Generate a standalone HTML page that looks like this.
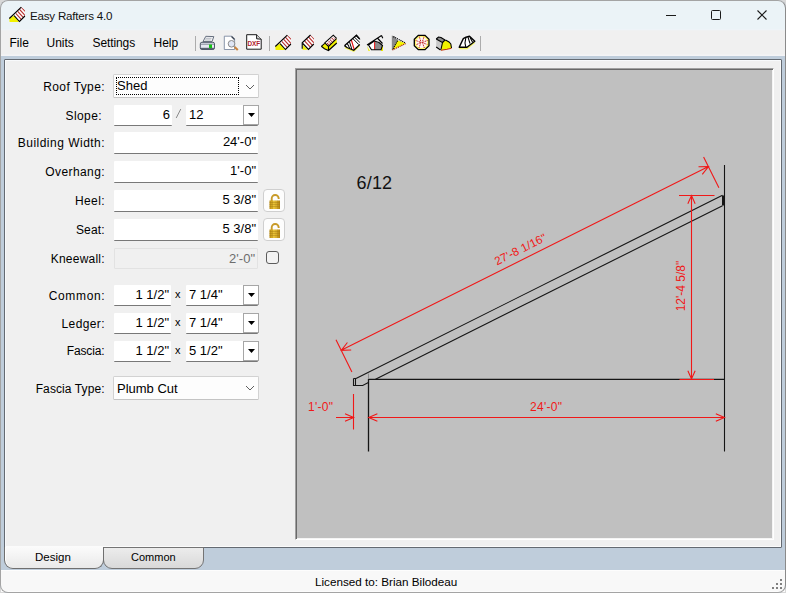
<!DOCTYPE html>
<html><head><meta charset="utf-8">
<style>
*{box-sizing:border-box}
html,body{margin:0;padding:0;width:786px;height:593px;overflow:hidden;background:#d8d8d8}
body{font-family:"Liberation Sans",sans-serif;position:relative}
.a{position:absolute}
#win{position:absolute;left:0;top:0;width:786px;height:593px;border-radius:8px;overflow:hidden;background:#bfcddb}
#wb{position:absolute;left:0;top:0;width:786px;height:593px;border-radius:8px;border:1px solid #a4a4a4;border-right-color:#8a8a8a;pointer-events:none;z-index:10}
#title{position:absolute;left:0;top:0;width:786px;height:31px;background:linear-gradient(#ebf3f7 0,#ebf3f7 29px,#eef3f8 29px,#eef3f8 30px,#eff1f2 30px)}
#menu{position:absolute;left:0;top:31px;width:786px;height:25px;background:linear-gradient(#f0f0f0 0,#f0f0f0 23px,#f4f4f6 24px)}
.mi{position:absolute;top:36px;font-size:12px;color:#000;line-height:14px}
.lbl{position:absolute;font-size:12px;letter-spacing:0.4px;color:#000;text-align:right;right:681px;line-height:14px;white-space:nowrap}
.tb{position:absolute;background:#fff;border-bottom:1px solid #787878;border-radius:1px;font-size:13px;line-height:20px;text-align:right;padding-right:2px;white-space:nowrap}
.dd{position:absolute;width:16px;background:#fff;border:1px solid #a6a6a6;}
.dd:after{content:"";position:absolute;left:4px;top:7px;width:7px;height:4px;background:#000;clip-path:polygon(0 0,100% 0,50% 100%)}
.sep{position:absolute;width:1px;background:#acacac}
.cb{background:#fdfdfd;border:1px solid #d2d2d2;border-bottom-color:#c4c4c4;border-radius:1.5px}
.lockb{width:22px;height:23px;border:1px solid #cfcfcf;border-radius:4px;background:#fdfdfd;overflow:hidden}
</style></head><body>
<div id="win">
  <div id="title"></div>
  <div id="menu"></div>
</div>
<!-- title -->
<div class="a" style="left:30px;top:9px;font-size:11.6px;letter-spacing:-0.22px;color:#111;line-height:13px">Easy Rafters 4.0</div>
<div class="a" style="left:666px;top:15px;width:10px;height:1px;background:#1a1a1a"></div>
<div class="a" style="left:711px;top:10px;width:10px;height:10px;border:1px solid #1a1a1a;border-radius:1.5px"></div>
<svg class="a" style="left:757px;top:10px" width="10" height="10"><path d="M0.5 0.5L9.5 9.5M9.5 0.5L0.5 9.5" stroke="#1a1a1a" stroke-width="1.1"/></svg>

<!-- menu -->
<div class="mi" style="left:9.5px">File</div>
<div class="mi" style="left:46.5px">Units</div>
<div class="mi" style="left:92.5px;letter-spacing:-0.1px">Settings</div>
<div class="mi" style="left:153.5px">Help</div>
<div class="sep" style="left:195px;top:36px;height:15px"></div>
<div class="sep" style="left:269px;top:36px;height:15px"></div>
<div class="sep" style="left:480px;top:36px;height:15px"></div>

<!-- main panel -->
<div class="a" style="left:4px;top:59px;width:778px;height:489px;background:#f0f0f0;border:1px solid #646a72;border-radius:1px;box-shadow:inset 1px 1px 0 #f8fafc, inset -1px -1px 0 #fbfbfb"></div>


<!-- left form -->
<div class="lbl" style="top:80px">Roof Type:</div>
<div class="lbl" style="top:109px;right:684px">Slope:</div>
<div class="lbl" style="top:136px;letter-spacing:0.49px;right:680.9px">Building Width:</div>
<div class="lbl" style="top:165px">Overhang:</div>
<div class="lbl" style="top:194px">Heel:</div>
<div class="lbl" style="top:223px;letter-spacing:0.14px;right:681.3px">Seat:</div>
<div class="lbl" style="top:252px;letter-spacing:0.23px;right:681.2px">Kneewall:</div>
<div class="lbl" style="top:289px;letter-spacing:0.65px;right:680.7px">Common:</div>
<div class="lbl" style="top:317px">Ledger:</div>
<div class="lbl" style="top:344px;letter-spacing:-0.13px;right:681.5px">Fascia:</div>
<div class="lbl" style="top:382px;letter-spacing:0.1px;right:681.3px">Fascia Type:</div>

<div class="a cb" style="left:113px;top:74px;width:146px;height:24px"></div>
<div class="a" style="left:116px;top:77px;width:123px;height:18px;border:1px dotted #000"></div>
<div class="a" style="left:117px;top:76px;font-size:13px;line-height:20px">Shed</div>
<svg class="a" style="left:245px;top:84px" width="10" height="6"><path d="M1 1L5 5L9 1" fill="none" stroke="#606060" stroke-width="1"/></svg>

<div class="tb" style="left:114px;top:105px;width:58px;height:21px">6</div>
<svg class="a" style="left:175px;top:108px" width="7" height="11"><path d="M1.2,10L5.8,1" stroke="#8a8a8a" stroke-width="1"/></svg>
<div class="tb" style="left:186px;top:105px;width:72px;height:21px;text-align:left;padding-left:3px">12</div>
<div class="dd" style="left:243px;top:105px;height:20px"></div>

<div class="tb" style="left:114px;top:132px;width:144px;height:22px">24'-0"</div>
<div class="tb" style="left:114px;top:161px;width:144px;height:22px">1'-0"</div>
<div class="tb" style="left:114px;top:190px;width:144px;height:22px">5 3/8"</div>
<div class="tb" style="left:114px;top:219px;width:144px;height:22px">5 3/8"</div>
<div class="tb" style="left:114px;top:248px;width:144px;height:21px;background:#f0f0f0;border:1px solid #e2e2e2;color:#6d6d6d;line-height:19px">2'-0"</div>

<div class="a lockb" style="left:263px;top:189px"><svg width="22" height="23" style="position:absolute;left:0;top:0"><defs><linearGradient id="lg" x1="0" y1="0" x2="1" y2="0"><stop offset="0" stop-color="#b88a10"/><stop offset="0.45" stop-color="#f2cc40"/><stop offset="1" stop-color="#b08010"/></linearGradient></defs>
<path d="M7.7,11V8.6A3.5,3.5 0 0 1 14.7,8.4V8.9" fill="none" stroke="#c89a28" stroke-width="1.9"/>
<rect x="5.5" y="10.5" width="10.5" height="8.5" fill="url(#lg)"/>
<path d="M5.5,12.5H16M5.5,14.5H16M5.5,16.5H16" stroke="#a27a12" stroke-width="0.6" opacity="0.7"/>
<path d="M8.5,10.5V19M11,10.5V19M13.5,10.5V19" stroke="#a27a12" stroke-width="0.5" opacity="0.5"/>
</svg></div>
<div class="a lockb" style="left:263px;top:218px"><svg width="22" height="23" style="position:absolute;left:0;top:0"><defs><linearGradient id="lg2" x1="0" y1="0" x2="1" y2="0"><stop offset="0" stop-color="#b88a10"/><stop offset="0.45" stop-color="#f2cc40"/><stop offset="1" stop-color="#b08010"/></linearGradient></defs>
<path d="M7.7,11V8.6A3.5,3.5 0 0 1 14.7,8.4V8.9" fill="none" stroke="#c89a28" stroke-width="1.9"/>
<rect x="5.5" y="10.5" width="10.5" height="8.5" fill="url(#lg2)"/>
<path d="M5.5,12.5H16M5.5,14.5H16M5.5,16.5H16" stroke="#a27a12" stroke-width="0.6" opacity="0.7"/>
<path d="M8.5,10.5V19M11,10.5V19M13.5,10.5V19" stroke="#a27a12" stroke-width="0.5" opacity="0.5"/>
</svg></div>
<div class="a" style="left:266px;top:251px;width:13px;height:13px;border:1px solid #5c5c5c;border-radius:3px;background:#f3f3f3"></div>

<div class="tb" style="left:114px;top:285px;width:57px;height:21px">1 1/2"</div>
<div class="a" style="left:175px;top:287px;font-size:11px;line-height:14px">x</div>
<div class="tb" style="left:186px;top:285px;width:72px;height:21px;text-align:left;padding-left:3px">7 1/4"</div>
<div class="dd" style="left:243px;top:285px;height:20px"></div>

<div class="tb" style="left:114px;top:313px;width:57px;height:21px">1 1/2"</div>
<div class="a" style="left:175px;top:315px;font-size:11px;line-height:14px">x</div>
<div class="tb" style="left:186px;top:313px;width:72px;height:21px;text-align:left;padding-left:3px">7 1/4"</div>
<div class="dd" style="left:243px;top:313px;height:20px"></div>

<div class="tb" style="left:114px;top:341px;width:57px;height:21px">1 1/2"</div>
<div class="a" style="left:175px;top:343px;font-size:11px;line-height:14px">x</div>
<div class="tb" style="left:186px;top:341px;width:72px;height:21px;text-align:left;padding-left:3px">5 1/2"</div>
<div class="dd" style="left:243px;top:341px;height:20px"></div>

<div class="a cb" style="left:113px;top:376px;width:146px;height:24px"></div>
<div class="a" style="left:117px;top:379px;font-size:13px;line-height:20px">Plumb Cut</div>
<svg class="a" style="left:245px;top:385px" width="10" height="6"><path d="M1 1L5 5L9 1" fill="none" stroke="#606060" stroke-width="1"/></svg>


<!-- drawing -->
<div class="a" style="left:295px;top:68px;width:479px;height:472px;background:#c0c0c0;border-top:1px solid #a0a0a0;border-left:1px solid #a0a0a0;border-right:1px solid #fff;border-bottom:1px solid #fff;box-shadow:inset 1px 1px 0 #696969, inset -1px -1px 0 #f4f4f4"></div>
<svg class="a" style="left:0;top:0" width="786" height="593" viewBox="0 0 786 593">
<g fill="none" stroke="#151515" stroke-width="1.1">
<path d="M724.5,165L724.5,451.5"/>
<path d="M368.5,379L368.5,451.5" stroke-width="1.3"/>
<path d="M368,379.4L724.5,379.4" stroke-width="1.4"/>
<path d="M356,378.5L722.5,195.25"/>
<path d="M375.5,379.2L722.5,205.75"/>
<path d="M353.5,378.5L353.5,385.5L362.7,385.5L368.4,382.6"/>
<path d="M355.5,378.5L355.5,385.5"/>
<path d="M353.5,378.5L356,378.5"/>
<path d="M368.5,373.5L368.5,379" stroke="#8c8c8c"/>
</g>
<rect x="722" y="195.5" width="2.5" height="10" fill="#151515"/>
<path d="M341.2,350.3L708.5,166.5M351.20,350.03L341.20,350.30L347.42,342.47M698.50,166.77L708.50,166.50L702.28,174.33M336,339.7L351.9,372M703.6,157.1L718.9,187.8M691.5,195.5L691.5,379M687.84,203.72L691.50,195.50L695.16,203.72M695.16,370.78L691.50,379.00L687.84,370.78M679,195.5L714.5,195.5M679.5,379.5L714,379.5M368.7,417.5L724.5,417.5M377.38,421.36L368.70,417.50L377.38,413.64M715.82,413.64L724.50,417.50L715.82,421.36M336,417.5L353.7,417.5M345.02,413.64L353.70,417.50L345.02,421.36M353.5,394L353.5,429.5" fill="none" stroke="#f01818" stroke-width="1.1"/>
<g fill="#f01818" font-family="Liberation Sans" font-size="12">
<text x="308" y="411.4" letter-spacing="0.3">1'-0"</text>
<text x="530" y="411" letter-spacing="0.3">24'-0"</text>
<text transform="translate(685.4,311.3) rotate(-90)" letter-spacing="0">12'-4 5/8"</text>
<text transform="translate(497,265.5) rotate(-26.565)" font-size="11.6" letter-spacing="0.1">27'-8 1/16"</text>
</g>
<text x="356.5" y="188.8" font-family="Liberation Sans" font-size="18" letter-spacing="0.2" fill="#111">6/12</text>
</svg>

<!-- tabs -->
<div class="a" style="left:103px;top:547px;width:101px;height:22px;border:1px solid #747474;border-radius:0 0 9px 9px;background:linear-gradient(#ececec,#d9d9d9)"></div>
<div class="a" style="left:4px;top:547px;width:100px;height:22px;border:1px solid #6f6f6f;border-top:none;border-radius:0 0 9px 9px;background:linear-gradient(#fbfbfb,#e9e9e9);box-shadow:inset 1px 0 0 #fff"></div>
<div class="a" style="left:35px;top:550px;font-size:11.5px;line-height:14px">Design</div>
<div class="a" style="left:131px;top:550px;font-size:11px;line-height:14px">Common</div>
<!-- status -->
<div class="a" style="left:1px;top:570px;width:784px;height:22px;background:#f8f8f8;border-top:1px solid #fdfdfd;border-bottom:1px solid #fcfcfc"></div>
<div class="a" style="left:315px;top:575px;font-size:11.7px;line-height:14px">Licensed to: Brian Bilodeau</div>
<svg class="a" style="left:772px;top:579px" width="10" height="10"><g fill="#808080"><rect x="8" y="0" width="2" height="2"/><rect x="4" y="4" width="2" height="2"/><rect x="8" y="4" width="2" height="2"/><rect x="0" y="8" width="2" height="2"/><rect x="4" y="8" width="2" height="2"/><rect x="8" y="8" width="2" height="2"/></g></svg>


<svg class="a" style="left:0;top:0" width="786" height="60" viewBox="0 0 786 60">
<defs><symbol id="ished" viewBox="0 0 24 20" overflow="visible">
<clipPath id="cs1"><polygon points="8.1,11.6 15.3,3.2 18.8,6 18.9,12 13.5,17.5"/></clipPath>
<polygon points="8.1,11.6 15.3,3.2 18.8,6 18.9,12 13.5,17.5" fill="#fff"/>
<g clip-path="url(#cs1)"><path d="M7.88,7.29L18.00,18.34M9.67,5.19L19.80,16.24M11.47,3.09L21.60,14.14M13.28,0.99L23.40,12.04" stroke="#b83232" stroke-width="1.2" fill="none"/></g>
<polygon points="3.3,14.6 8.1,11.6 13,17.9 3.6,17.9" fill="#f2f200"/>
<path d="M3.3,14.5L15.3,3.2M8.1,11.6L13.5,17.5L18.9,12" stroke="#000" stroke-width="1.1" fill="none"/>
</symbol><symbol id="ibox" viewBox="0 0 24 20" overflow="visible">
<clipPath id="cs2"><polygon points="6.8,11 14.5,3 18,6.5 17.8,12 12.5,17.5"/></clipPath>
<polygon points="6.8,11 14.5,3 18,6.5 17.8,12 12.5,17.5" fill="#fff"/>
<g clip-path="url(#cs2)"><path d="M6.70,6.79L16.83,17.84M8.62,4.79L18.75,15.84M10.55,2.79L20.68,13.84M12.47,0.79L22.60,11.84" stroke="#b83232" stroke-width="1.2" fill="none"/></g>
<polygon points="6.5,12.5 11.8,17.8 6.5,17.8" fill="#f2f200"/>
<path d="M6.2,16.8L6.2,10.8L14.5,3M6.8,11.5L12.5,17.5L17.8,12" stroke="#000" stroke-width="1.1" fill="none"/>
</symbol></defs>
<use href="#ished" x="6" y="4" width="24" height="20"/>
<use href="#ished" x="272" y="32" width="24" height="20"/>
<use href="#ibox" x="296" y="32" width="24" height="20"/>
<!-- printer -->
<g transform="translate(196,32)">
<path d="M9.8,4.3L17.8,4.6L16,9.6L7,9.6Z" fill="#f4f4f6" stroke="#566070" stroke-width="0.9"/>
<path d="M9.5,6.3L15.5,6.3M8.8,8L14.8,8" stroke="#9aa0aa" stroke-width="0.7"/>
<rect x="4.3" y="10.3" width="14.2" height="7.2" rx="1.6" fill="#e6e8f2" stroke="#4d5666" stroke-width="1"/>
<path d="M4.8,12.2L18,12.2" stroke="#6a7282" stroke-width="0.8"/>
<rect x="4.8" y="15.8" width="13.2" height="1.5" fill="#5a6272"/>
<rect x="13" y="12.5" width="3" height="3.6" fill="#14c214"/>
</g>
<!-- preview -->
<g transform="translate(219,32)">
<path d="M5.3,4.2L12.8,4.2L15.6,7L15.6,17.5L5.3,17.5Z" fill="#fff" stroke="#7d8aa0" stroke-width="0.9"/>
<path d="M12.5,4.5L15.5,7.5" stroke="#3a4250" stroke-width="1.2"/>
<circle cx="12.5" cy="11.8" r="3.3" fill="#dfe6f5" stroke="#8a8a8a" stroke-width="1"/>
<path d="M15.6,15L18.8,18" stroke="#c8823c" stroke-width="2.2"/>
</g>
<!-- dxf -->
<g transform="translate(242,32)">
<path d="M4.7,2.7L14.6,2.7L19.2,7.2L19.2,17.2L4.7,17.2Z" fill="#fff" stroke="#1a1a1a" stroke-width="1" stroke-linejoin="round"/>
<path d="M14.6,2.7L14.6,6.8L19.2,7.2" fill="#d8d8d8" stroke="#1a1a1a" stroke-width="1"/>
<text x="5.6" y="13.8" font-family="Liberation Sans" font-weight="bold" font-size="6.4" fill="#b0202c" letter-spacing="-0.1">DXF</text>
</g>
<!-- gable lean-to -->
<g transform="translate(318,32)">
<polygon points="7.5,11 15.3,3.2 18.5,6 10.5,14.5" fill="#fff"/>
<path d="M9,12L15.5,5.2M10.2,13.2L17,6.2" stroke="#b83232" stroke-width="1.2" stroke-dasharray="1.3 1"/>
<polygon points="10.5,14.5 18.5,6.5 18.8,11 11,18.2" fill="#f2f200"/>
<polygon points="3.3,14.3 7,11.2 10.5,14.5 10.5,18 6,16.5" fill="#f2f200"/>
<path d="M6.5,11.2L15.3,3.2L18.6,6.3M3.3,14.3L7,11.2L10.5,14.5L18.5,6.6M10.5,14.5L10.5,18.5M3.3,14.3L6.5,16.8L10.5,18.5L18.8,11" stroke="#000" stroke-width="1.1" fill="none"/>
</g>
<!-- hip -->
<g transform="translate(340,32)">
<polygon points="4.4,13.8 16.5,3.2 19.8,6.8 19.8,12.5 13.8,18.2 7,15.5" fill="#fff"/>
<path d="M5,15.6L13.8,19.2L19.6,13.5" stroke="#f0f050" stroke-width="1.3" fill="none"/>
<path d="M12.6,6.3L18.8,12.6M14.2,4.9L19.8,10.4M15.8,3.6L19.8,7.6M7.2,11.5L9.8,16.4M9.4,9.5L11.8,17.2" stroke="#000" stroke-width="1" stroke-dasharray="none"/>
<path d="M5.2,13.2L7,15.2M7.5,11.3L8.8,13.8" stroke="#000" stroke-width="0.9" stroke-dasharray="1 0.8"/>
<path d="M11.3,7.8L14.3,17.8" stroke="#e81010" stroke-width="1.2"/>
<path d="M4.4,13.8L16.5,3.2L19.8,6.8M19.8,12.5L13.8,18.2L7,15.5L4.4,13.8" stroke="#000" stroke-width="1.2" fill="none"/>
</g>
<!-- hip2 gray -->
<g transform="translate(363,32)">
<polygon points="4,14 5.5,19 7,19" fill="#f0f000"/>
<polygon points="18.5,14 20,14.5 20,19 18,19" fill="#f0f000"/>
<polygon points="5.5,13 11.3,9 11.5,17.8 8.5,17.8" fill="#fff"/>
<polygon points="12,9.5 16,11 19.5,13.5 18,17.8 12,17.8" fill="#8c8c8c"/>
<path d="M11.6,9.5L11.6,17.8" stroke="#e81010" stroke-width="1"/>
<path d="M4,13L18.5,3.5M18.5,3.5L19.8,6.3M14.8,6.5L19.5,11.5M5.5,13L8.5,17.8L18,17.8L19.5,13.5L16,10.5L11.3,9Z" stroke="#000" stroke-width="1.1" fill="none"/>
</g>
<!-- triangle -->
<g transform="translate(387,32)">
<polygon points="4.8,3.6 7,4.2 11,8.3 6,17.5 4.8,18" fill="#8a8a8a"/>
<polygon points="10.6,8.6 18.8,11.3 5.4,18" fill="#f6f600"/>
<path d="M6.4,4.6L18.8,11.2M10.6,8.8L5.6,17.6" stroke="#000" stroke-width="1.2" stroke-dasharray="1.1 0.9" fill="none"/>
<path d="M5.4,18L18.6,11.6" stroke="#a01808" stroke-width="1.2" stroke-dasharray="1.1 0.9"/>
</g>
<!-- octagon -->
<g transform="translate(410,32)">
<polygon points="8.3,3.3 15,3.3 19,7.3 19,13.7 15,17.7 8.3,17.7 4.3,13.7 4.3,7.3" fill="#fff870" stroke="#000" stroke-width="1.3"/>
<circle cx="11.65" cy="10.5" r="5.6" fill="#fff4f4"/>
<path d="M9.3,4.6L11,10.3L8.8,16.4M14,4.6L12.3,10.3L14.5,16.4M5.6,8.4L11,10.5L6,12.8M17.6,8.4L12.3,10.5L17.4,12.6" stroke="#c01818" stroke-width="1" stroke-dasharray="1.1 0.7" fill="none"/>
</g>
<!-- dome -->
<g transform="translate(432,32)">
<polygon points="4.2,7.5 10.5,10.5 9,17.5 4.2,15" fill="#c8c8c8"/>
<polygon points="4.2,7 6.5,5 9,5.5 13,8 10.5,10.5" fill="#8c8c8c"/>
<path d="M10.2,10.8L14,8.2L17,10L19,12.5L19.5,16L15,17.2L9,18.3Z" fill="#f2f200"/>
<path d="M9,18.3L15,17.2L19.5,16.2" stroke="#c03010" stroke-width="1.1" fill="none"/>
<path d="M4.2,7L6.5,5L9,5.5L13,8L14,8.2L17,10L18.8,12L19.5,16M4.2,7L10.5,10.5L9,17.5M4.2,15L8.5,18M10.5,10.5L13,8" stroke="#000" stroke-width="1.1" fill="none"/>
</g>
<!-- pyramid -->
<g transform="translate(455,32)">
<path d="M4.3,16.6L12,16.6L19.6,10.3" stroke="#f2f260" stroke-width="1.5" fill="none"/>
<polygon points="4.2,15.2 8.3,6.6 11,5.2 14.5,4.3 19.8,9.2 12,15.3" fill="#fff"/>
<path d="M10.8,5.8C9.8,9 9.8,12 10.8,15M13,5.2L15,11.5M15,5.2L17.6,10.2" stroke="#000" stroke-width="1.1" fill="none"/>
<path d="M4.2,15.3L8.3,6.6L11,5.2L14.5,4.3L19.8,9.2L12,15.3Z" stroke="#000" stroke-width="1.4" fill="none" stroke-linejoin="round"/>
</g>
</svg>

<div id="wb"></div>
</body></html>
